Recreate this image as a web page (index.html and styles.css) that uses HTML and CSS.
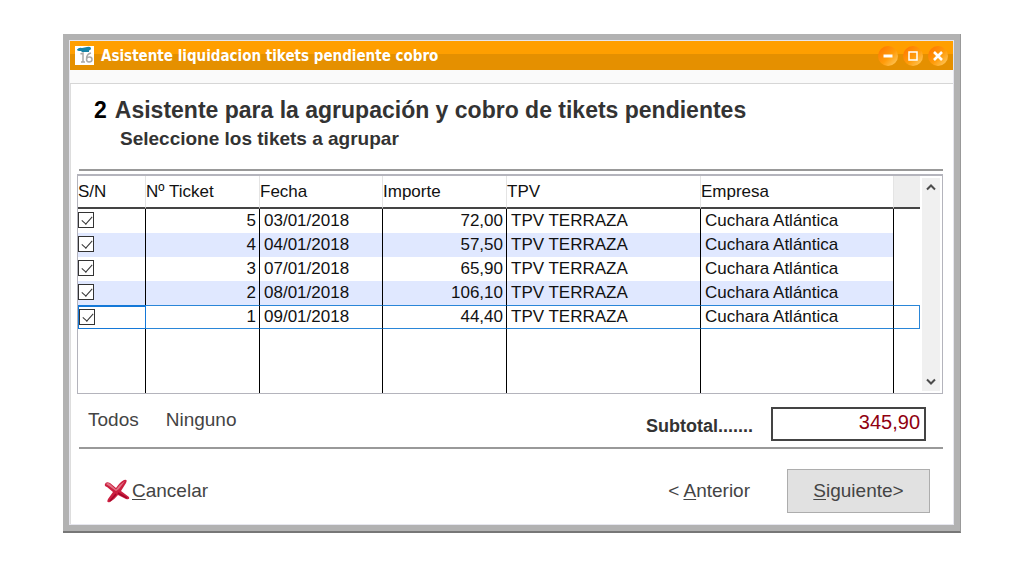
FILE: index.html
```html
<!DOCTYPE html>
<html lang="es">
<head>
<meta charset="utf-8">
<title>Asistente liquidacion tikets pendiente cobro</title>
<link rel="stylesheet" href="styles.css">
</head>
<body>
<main class="window">
  <div class="frame">
    <header class="titlebar">
      <svg class="app-icon" viewBox="0 0 19 19" aria-hidden="true">
        <rect width="19" height="19" fill="#fff"/>
        <path d="M2 3.500Q4 1 7 2L12 1Q16 0 16 2.500Q16 4 14 4.500L14 6H7L6 5Q2 5 2 3.500Z" fill="#1683a6"/>
        <path d="M5.500 8L8 7V16M6 16H10M16 7Q11.500 8 11.500 13Q11.500 16 14 16Q17 16 17 13.500Q17 11 14.500 11Q12 11 11.500 13" fill="none" stroke="#a9a9a9" stroke-width="1.500"/>
      </svg>
      <h1 class="title">Asistente liquidacion tikets pendiente cobro</h1>
      <div class="window-controls">
        <button class="round" type="button" aria-label="Minimizar"><svg viewBox="0 0 20 20"><path d="M5.500 10H14.500" stroke="#fff" stroke-width="3"/></svg></button>
        <button class="round" type="button" aria-label="Maximizar"><svg viewBox="0 0 20 20"><path d="M6 6H14V14H6Z" fill="none" stroke="#fff" stroke-width="1.500"/></svg></button>
        <button class="round" type="button" aria-label="Cerrar"><svg viewBox="0 0 20 20"><path d="M6 6L14 14M14 6L6 14" stroke="#fff" stroke-width="2.600"/></svg></button>
      </div>
    </header>
    <div class="strip"></div>
    <section class="content">
      <div class="heading">
        <h2 class="step"><span class="step-number">2</span>Asistente para la agrupación y cobro de tikets pendientes</h2>
        <p class="subtitle">Seleccione los tikets a agrupar</p>
      </div>
      <hr class="rule">
      <div class="grid">
        <table class="tickets">
          <colgroup><col class="c-check"><col class="c-number"><col class="c-date"><col class="c-amount"><col class="c-tpv"><col class="c-company"><col class="c-blank"></colgroup>
          <thead><tr><th>S/N</th><th>Nº Ticket</th><th>Fecha</th><th>Importe</th><th>TPV</th><th>Empresa</th><td class="corner"></td></tr></thead>
          <tbody>
            <tr><td class="tick"><input type="checkbox" aria-label="Ticket 5" checked></td><td class="num">5</td><td>03/01/2018</td><td class="num">72,00</td><td>TPV TERRAZA</td><td>Cuchara Atlántica</td><td></td></tr>
            <tr class="alt"><td class="tick"><input type="checkbox" aria-label="Ticket 4" checked></td><td class="num">4</td><td>04/01/2018</td><td class="num">57,50</td><td>TPV TERRAZA</td><td>Cuchara Atlántica</td><td></td></tr>
            <tr><td class="tick"><input type="checkbox" aria-label="Ticket 3" checked></td><td class="num">3</td><td>07/01/2018</td><td class="num">65,90</td><td>TPV TERRAZA</td><td>Cuchara Atlántica</td><td></td></tr>
            <tr class="alt"><td class="tick"><input type="checkbox" aria-label="Ticket 2" checked></td><td class="num">2</td><td>08/01/2018</td><td class="num">106,10</td><td>TPV TERRAZA</td><td>Cuchara Atlántica</td><td></td></tr>
            <tr class="current"><td class="tick"><input type="checkbox" aria-label="Ticket 1" checked></td><td class="num">1</td><td>09/01/2018</td><td class="num">44,40</td><td>TPV TERRAZA</td><td>Cuchara Atlántica</td><td></td></tr>
            <tr class="empty"><td></td><td></td><td></td><td></td><td></td><td></td><td></td></tr>
          </tbody>
        </table>
        <div class="scrollbar">
          <button class="scroll" type="button" aria-label="Subir"><svg viewBox="0 0 10 8"><path d="M1 6.500L5 2.500L9 6.500" fill="none" stroke="#4c4c4c" stroke-width="2"/></svg></button>
          <button class="scroll" type="button" aria-label="Bajar"><svg viewBox="0 0 10 8"><path d="M1 1.500L5 5.500L9 1.500" fill="none" stroke="#4c4c4c" stroke-width="2"/></svg></button>
        </div>
      </div>
      <div class="summary">
        <div class="select-links">
          <button class="plain" type="button">Todos</button>
          <button class="plain" type="button">Ninguno</button>
        </div>
        <div class="subtotal">
          <label class="subtotal-label" for="subtotal">Subtotal.......</label>
          <input class="subtotal-value" id="subtotal" type="text" value="345,90" readonly>
        </div>
      </div>
      <hr class="rule">
      <footer class="actions">
        <button class="plain cancel" type="button">
          <svg class="cross" viewBox="0 0 26 24" aria-hidden="true">
            <path d="M1 5Q2 2 6 4L12 9Q16 3 20 1Q24 0 22 4L17 12L25 18Q26 21 22 20L14 16Q10 21 6 23Q2 24 4 20L9 13L3 8Q0 7 1 5Z" fill="#cc1f40"/>
            <path d="M2 5Q4 3 6 5L12 10.500Q16 5 21 2L15 10L12 12L5 7Z" fill="#e07485"/>
            <path d="M14 14L23 19M12 15L6 22" fill="none" stroke="#a5062a" stroke-width="1.500"/>
          </svg><span><u>C</u>ancelar</span>
        </button>
        <div class="steps">
          <button class="plain" type="button">&lt; <u>A</u>nterior</button>
          <button class="next" type="button"><u>S</u>iguiente&gt;</button>
        </div>
      </footer>
    </section>
  </div>
</main>
</body>
</html>
```
FILE: styles.css
```css
* { box-sizing: border-box; }
body {
  margin: 0;
  padding: 34px 63px;
  background: #fff;
  color: #111;
  font-family: "Liberation Sans", Arial, sans-serif;
}
h1, h2, p { margin: 0; }
button { padding: 0; border: 0; background: none; font: inherit; color: inherit; }
svg { display: block; }
u { text-decoration-thickness: 1px; text-underline-offset: 2px; }
.window {
  padding: 6px;
  background: #b2b2b2;
  border-bottom: 2px solid #777;
  border-right: 1px solid #999;
}
.frame { border: 1px solid #e6e6ee; background: #fff; }
.titlebar {
  display: flex;
  align-items: center;
  gap: 7px;
  height: 29px;
  padding: 0 5px;
  background: linear-gradient(#ff9f00 45%, #e59000 45%);
}
.app-icon { width: 19px; height: 19px; }
.title { flex: 1; font: bold 15px "DejaVu Sans Condensed", "DejaVu Sans", sans-serif; color: #fff; }
.window-controls { display: flex; gap: 5px; }
.round {
  width: 20px;
  height: 20px;
  border-radius: 50%;
  background: linear-gradient(135deg, #ff7200, #ff9c0a 55%, #ffcf6a);
}
.round svg { width: 20px; height: 20px; }
.strip { height: 14px; background: #fafafa; border-bottom: 1px solid #d6d6d6; }
.content { padding: 11px 10px 11px 6px; border-left: 1px solid #ddd; }
.heading { padding: 0 0 16px 17px; color: #333; }
.step { font-size: 23px; line-height: 30px; }
.step-number { margin-right: 8px; color: #000; }
.subtitle { padding-left: 26px; font-size: 19px; line-height: 28px; }
.subtitle, .subtotal-label { font-weight: bold; }
.rule { height: 2px; margin: 0 0 0 2px; border: 0; background: #999; }
.grid {
  display: flex;
  margin-top: 3px;
  padding-right: 2px;
  border: 1px solid #b4b4bc;
  border-top-width: 2px;
}
.tickets { flex: 1; width: 0; table-layout: fixed; border-spacing: 0; font-size: 17px; line-height: 22px; }
.c-check { width: 68px; }
.c-number { width: 114px; }
.c-date { width: 123px; }
.c-amount { width: 124px; }
.c-tpv { width: 194px; }
.c-blank { width: 26px; }
.tickets th, .tickets .corner {
  height: 33px;
  padding: 0;
  border-right: 1px solid #e4e4e4;
  border-bottom: 2px solid #444;
  font-weight: normal;
  text-align: left;
}
.tickets .corner { background: #eee; border-right: 0; }
.tickets tbody td { height: 24px; padding: 0 4px; border-right: 1px solid #000; white-space: nowrap; }
.tickets tbody td:last-child { border-right: 0; }
.tickets tbody .num { padding: 0 3px; text-align: right; }
.alt td:not(:last-child) { background: #e0e8ff; }
.tickets tbody .tick { padding: 0 0 2px; }
.tick input {
  appearance: none;
  display: block;
  width: 16px;
  height: 16px;
  margin: 0;
  border: 1px solid #333;
  background: #fff;
}
.tick input:checked::after {
  content: "";
  display: block;
  width: 5px;
  height: 9px;
  margin: 1px 0 0 5px;
  border: solid #333;
  border-width: 0 1px 1px 0;
  transform: rotate(42deg);
}
.tickets .current td { border-top: 1px solid #2a86d8; border-bottom: 1px solid #2a86d8; }
.tickets .current .tick { border: 1px solid #1478d8; border-top-width: 2px; }
.tickets .current td:last-child { border-right: 1px solid #2a86d8; }
.tickets .empty td { height: 64px; }
.scrollbar {
  display: flex;
  flex-direction: column;
  justify-content: space-between;
  width: 18px;
  margin: 2px 0 2px 2px;
  padding: 5px 4px;
  background: #f0f0f0;
}
.scroll svg { width: 10px; height: 8px; }
.summary {
  display: flex;
  justify-content: space-between;
  padding: 13px 17px 6px 11px;
  font-size: 19px;
  color: #444;
}
.select-links { display: flex; align-items: flex-start; gap: 27px; padding-top: 2px; }
.subtotal { display: flex; align-items: center; gap: 18px; }
.subtotal-label { padding-top: 4px; font-size: 18px; color: #333; }
.subtotal-value {
  width: 155px;
  height: 34px;
  padding: 0 4px 4px;
  border: 2px solid #444;
  background: #fff;
  font: inherit;
  font-size: 20px;
  color: #900010;
  text-align: right;
}
.actions {
  display: flex;
  align-items: center;
  justify-content: space-between;
  padding: 20px 13px 0 27px;
  font-size: 19px;
  color: #444;
}
.cancel { display: flex; align-items: center; gap: 2px; }
.cross { width: 26px; height: 24px; }
.steps { display: flex; align-items: center; gap: 37px; }
.next { width: 143px; height: 44px; border: 1px solid #adadad; background: #e1e1e1; }
```
